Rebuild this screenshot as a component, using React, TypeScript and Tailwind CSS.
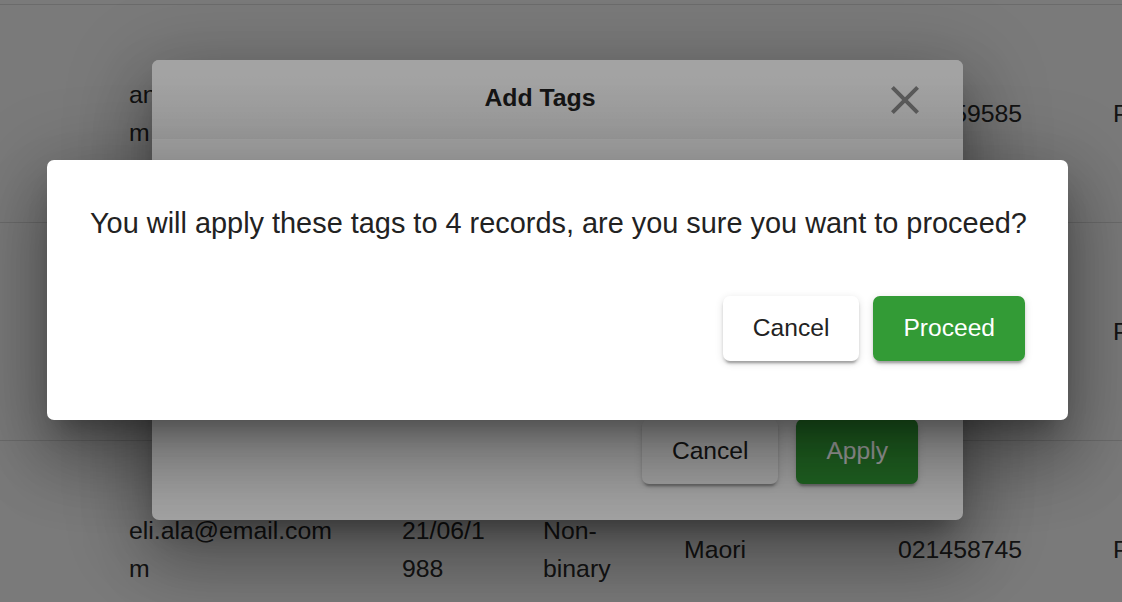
import React from "react";

type Row = {
  email: string[];
  dob: string[];
  gender: string[];
  ethnicity: string[];
  phone: string[];
  status: string[];
};

const rows: Row[] = [
  {
    email: ["anaru.wiremu@email.co", "m"],
    dob: ["14/02/1", "992"],
    gender: ["Male"],
    ethnicity: ["Maori"],
    phone: ["021459585"],
    status: ["Pending"],
  },
  {
    email: ["sam.lee@email.com"],
    dob: ["03/11/1", "985"],
    gender: ["Female"],
    ethnicity: ["Asian"],
    phone: ["021774512"],
    status: ["Pending"],
  },
  {
    email: ["eli.ala@email.com", "m"],
    dob: ["21/06/1", "988"],
    gender: ["Non-", "binary"],
    ethnicity: ["Maori"],
    phone: ["021458745"],
    status: ["Pending"],
  },
];

const dialogShadow =
  "shadow-[0_19px_26px_-12px_rgba(0,0,0,0.3),0_42px_66px_5px_rgba(0,0,0,0.22),0_16px_80px_14px_rgba(0,0,0,0.2)]";

function Cell({ lines, width }: { lines: string[]; width: string }) {
  return (
    <div className={`${width} shrink-0 whitespace-nowrap`}>
      {lines.map((l, i) => (
        <div key={i}>{l}</div>
      ))}
    </div>
  );
}

function Button({ label, primary }: { label: string; primary?: boolean }) {
  return (
    <button
      type="button"
      className={`h-[65px] rounded-[7px] px-[30px] text-[24.6px] leading-none shadow-[0_5px_2px_-3px_rgba(0,0,0,0.2),0_3px_3px_0_rgba(0,0,0,0.14),0_2px_9px_0_rgba(0,0,0,0.12)] ${
        primary ? "bg-[#339b36] text-white" : "bg-white text-[#222222]"
      }`}
    >
      {label}
    </button>
  );
}

function CloseIcon() {
  return (
    <svg viewBox="0 0 24 24" className="h-[48px] w-[48px]" fill="#8e8e8e">
      <path d="M19 6.41 17.59 5 12 10.59 6.41 5 5 6.41 10.59 12 5 17.59 6.41 19 12 13.41 17.59 19 19 17.59 13.41 12z" />
    </svg>
  );
}

export default function App() {
  return (
    <div
      className="relative h-[602px] w-[1122px] overflow-hidden bg-white text-[#2b2b2b]"
      style={{ fontFamily: '"Liberation Sans", Arial, sans-serif' }}
    >
      {/* table behind */}
      <div className="h-[5px] border-b border-[#e0e0e0]" />
      {rows.map((r, i) => (
        <div
          key={i}
          className="flex h-[218px] items-center border-b border-[#e0e0e0] pl-[129px] text-[24.8px] leading-[38px]"
        >
          <Cell lines={r.email} width="w-[273px]" />
          <Cell lines={r.dob} width="w-[141px]" />
          <Cell lines={r.gender} width="w-[141px]" />
          <Cell lines={r.ethnicity} width="w-[214px]" />
          <Cell lines={r.phone} width="w-[215px]" />
          <Cell lines={r.status} width="w-[200px]" />
        </div>
      ))}

      {/* Add Tags modal */}
      <div className="absolute inset-0 flex items-center justify-center bg-black/25 pb-[22px] pr-[7px]">
        <div className={`flex h-[460px] w-[811px] flex-col overflow-hidden rounded-[7px] bg-white ${dialogShadow}`}>
          <div className="flex h-[79px] shrink-0 items-center bg-gradient-to-b from-white from-20% to-[#f1f1f1] pl-[47px] pr-[34px]">
            <h2 className="flex-1 pb-[4px] text-center text-[24.8px] font-bold text-[#222222]">Add Tags</h2>
            <CloseIcon />
          </div>
          <div className="flex-1" />
          <div className="flex justify-end gap-[18px] pb-[36px] pr-[45px]">
            <Button label="Cancel" />
            <Button label="Apply" primary />
          </div>
        </div>
      </div>

      {/* confirm dialog */}
      <div className="absolute inset-0 flex items-center justify-center bg-black/[0.36] pb-[22px] pr-[7px]">
        <div className={`w-[1021px] rounded-[7px] bg-white px-[43px] pb-[59px] pt-[42px] ${dialogShadow}`}>
          <p className="whitespace-nowrap text-[28.9px] leading-[43px] text-[#222222]">
            You will apply these tags to 4 records, are you sure you want to proceed?
          </p>
          <div className="mt-[51px] flex justify-end gap-[14px]">
            <Button label="Cancel" />
            <Button label="Proceed" primary />
          </div>
        </div>
      </div>
    </div>
  );
}
